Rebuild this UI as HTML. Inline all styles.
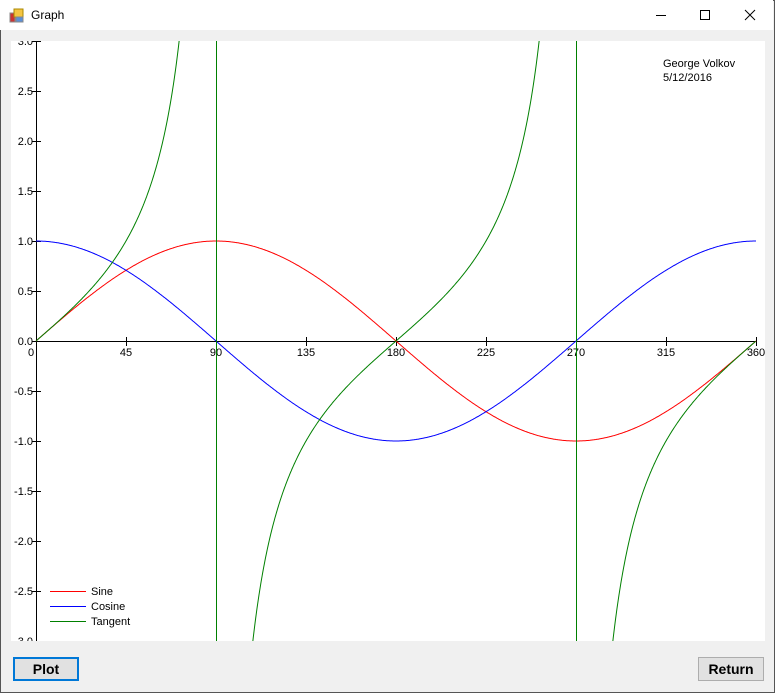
<!DOCTYPE html>
<html><head><meta charset="utf-8"><style>
body{margin:0;width:775px;height:693px;background:#f0f0f0;position:relative;overflow:hidden;font-family:"Liberation Sans",sans-serif;}
.win{position:absolute;left:0;top:0;width:773px;height:691px;border:1px solid #555;}
.title{position:absolute;left:0;top:0;width:773px;height:30px;background:#fff;}
.panel{position:absolute;left:11px;top:41px;width:754px;height:600px;background:#fff;overflow:hidden;}
.btn{position:absolute;top:657px;height:24px;font:bold 14px "Liberation Sans",sans-serif;text-align:center;line-height:22px;box-sizing:border-box;background:#e1e1e1;}
</style></head><body>
<div class="win"></div>
<div class="title">
<svg style="position:absolute;left:9px;top:8px" width="16" height="16"><rect x="1" y="5" width="5" height="9" fill="#c33" stroke="#888" stroke-width="1"/><rect x="5" y="1" width="9" height="8" fill="#f5c542" stroke="#a80" stroke-width="1"/><rect x="7" y="9" width="7" height="5" fill="#5a8fd8" stroke="#888"/></svg>
<div style="position:absolute;left:31px;top:8px;font-size:12px;color:#000">Graph</div>
<svg style="position:absolute;left:640px;top:0" width="133" height="30" stroke="#000" stroke-width="1" fill="none"><path d="M16 15.5h10"/><path d="M60.5 10.5h9v9h-9z"/><path d="M105 10l10 10M115 10l-10 10"/></svg>
</div>
<div class="panel"><svg id="g" width="754" height="600" font-family="Liberation Sans" font-size="11"></svg></div>
<div style="position:absolute;left:663px;top:57px;font-size:11px;line-height:14px">George Volkov<br>5/12/2016</div>
<div class="btn" style="left:13px;width:66px;border:2px solid #0078d7;line-height:20px">Plot</div>
<div class="btn" style="left:698px;width:66px;border:1px solid #adadad">Return</div>
<script>
var s='',ox=25,oy=300;
function X(d){return ox+d*2}function Y(v){return oy-v*100}
s+='<line x1="25.5" y1="0" x2="25.5" y2="600" stroke="#000"/>';
s+='<line x1="25" y1="300.5" x2="745" y2="300.5" stroke="#000"/>';
for(var i=-6;i<=6;i++){var y=Y(i/2);s+='<line x1="21" x2="30" y1="'+(y+.5)+'" y2="'+(y+.5)+'" stroke="#000"/>';
var t=(i/2).toFixed(1);s+='<text x="22" y="'+(y+4)+'" text-anchor="end">'+t+'</text>';}
for(var d=0;d<=360;d+=45){var x=X(d);s+='<line x1="'+(x+.5)+'" x2="'+(x+.5)+'" y1="296" y2="305" stroke="#000"/>';
s+='<text x="'+(x+(d==0?-5:0))+'" y="315" text-anchor="middle">'+d+'</text>';}
function path(f,c){var p='';for(var d=0;d<=360;d+=0.5){var v=f(d*Math.PI/180);if(Math.abs(v)>4){continue}p+=(p?'L':'M')+X(d).toFixed(1)+' '+Y(v).toFixed(1);}return '<path d="'+p+'" fill="none" stroke="'+c+'"/>';}
s+=path(Math.sin,'#f00');s+=path(Math.cos,'#00f');
function tp(a,b){var p='';for(var d=a;d<=b;d+=0.25){var v=Math.tan(d*Math.PI/180);if(Math.abs(v)>3.5)continue;p+=(p?'L':'M')+X(d).toFixed(1)+' '+Y(v).toFixed(1);}return p;}
s+='<path d="'+tp(0,89.9)+tp(90.1,269.9)+tp(270.1,360)+'" fill="none" stroke="#008000"/>';
s+='<line x1="205.5" x2="205.5" y1="0" y2="600" stroke="#008000"/><line x1="565.5" x2="565.5" y1="0" y2="600" stroke="#008000"/>';
var L=[['Sine','#f00'],['Cosine','#00f'],['Tangent','#008000']];
for(var k=0;k<3;k++){var y=550+k*15;s+='<line x1="39" x2="75" y1="'+(y+.5)+'" y2="'+(y+.5)+'" stroke="'+L[k][1]+'"/><text x="80" y="'+(y+4)+'">'+L[k][0]+'</text>';}
document.getElementById('g').innerHTML=s;
</script>
</body></html>
